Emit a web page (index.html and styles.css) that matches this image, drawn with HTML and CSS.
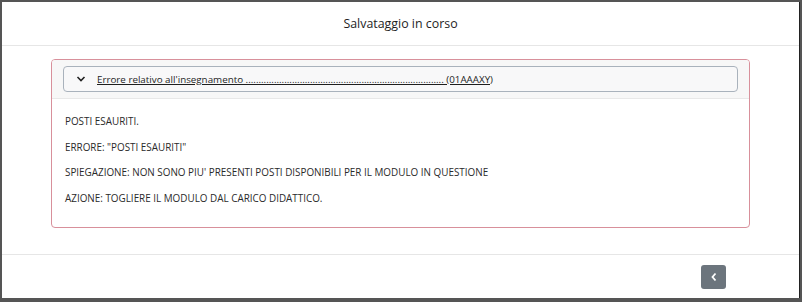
FILE: index.html
```html
<!DOCTYPE html>
<html lang="it">

<head>
    <meta charset="UTF-8">
    <meta name="viewport" content="width=device-width, initial-scale=1.0">
    <title>Salvataggio in corso</title>
    <link rel="stylesheet" href="styles.css">
</head>

<body>
    <div class="modal">
        <div class="modalHeader">
            <h1>Salvataggio in corso</h1>
        </div>

        <div class="modalBody">
            <div class="errorCard">
                <div class="errorCardHeader">
                    <div class="toggle">
                        <svg class="chevron" width="10" height="8" viewBox="0 0 10 8">
                            <path d="M1.5 2 L5 5.5 L8.5 2" fill="none" stroke="#222" stroke-width="1.6" />
                        </svg>
                        <a href="#" class="toggleLink">Errore relativo all'insegnamento ............................................................................. (01AAAXY)</a>
                    </div>
                </div>
                <div class="errorCardBody">
                    <p>POSTI ESAURITI.</p>
                    <p>ERRORE: "POSTI ESAURITI"</p>
                    <p>SPIEGAZIONE: NON SONO PIU' PRESENTI POSTI DISPONIBILI PER IL MODULO IN QUESTIONE</p>
                    <p>AZIONE: TOGLIERE IL MODULO DAL CARICO DIDATTICO.</p>
                </div>
            </div>
        </div>

        <div class="modalFooter">
            <button class="backButton" type="button" aria-label="Indietro">
                <svg width="10" height="12" viewBox="0 0 10 12">
                    <path d="M6.5 2.5 L3.5 6 L6.5 9.5" fill="none" stroke="#fff" stroke-width="1.8" />
                </svg>
            </button>
        </div>
    </div>
</body>

</html>
```

FILE: styles.css
```css
html, body {
    margin: 0;
    padding: 0;
}

body {
    background-color: #555;
    font-family: "Open Sans", "Noto Sans", sans-serif;
    color: #2a2a2a;
    height: 302px;
    overflow: hidden;
}

.modal {
    box-sizing: border-box;
    margin: 2px 2px 0 2px;
    height: 296px;
    background-color: #fff;
    border-right: 1px solid #222;
    display: flex;
    flex-direction: column;
}

.modalHeader {
    height: 43px;
    border-bottom: 1px solid #e6e6e6;
    display: flex;
    align-items: center;
    justify-content: center;
}

h1 {
    margin: 0;
    font-size: 12.4px;
    font-weight: normal;
    color: #1e1e1e;
}

.modalBody {
    padding: 13px 49px 26px 49px;
}

/* Red-bordered error card */
.errorCard {
    border: 1px solid #d8909b;
    border-radius: 4px;
    overflow: hidden;
}

.errorCardHeader {
    background-color: #f7f7f7;
    border-bottom: 1px solid #e8e8e8;
    padding: 6px 11px;
}

.toggle {
    height: 24px;
    border: 1px solid #a9b2bc;
    border-radius: 4px;
    background-color: #f8f8f9;
    display: flex;
    align-items: center;
    padding-left: 12px;
    gap: 11px;
}

.chevron {
    display: block;
}

.toggleLink {
    color: #1e1e1e;
    font-size: 9.8px;
    text-decoration: underline;
}

.errorCardBody {
    padding: 14px 13px 12px 13px;
}

.errorCardBody p {
    margin: 0 0 9.5px 0;
    font-size: 9.9px;
    line-height: 16px;
}

.modalFooter {
    flex: 1;
    border-top: 1px solid #e6e6e6;
    display: flex;
    justify-content: flex-end;
    align-items: flex-start;
    padding: 10px 73px 0 0;
}

.backButton {
    width: 25px;
    height: 24px;
    border: none;
    border-radius: 3px;
    background-color: #6c757d;
    display: flex;
    align-items: center;
    justify-content: center;
    padding: 0;
}
```
